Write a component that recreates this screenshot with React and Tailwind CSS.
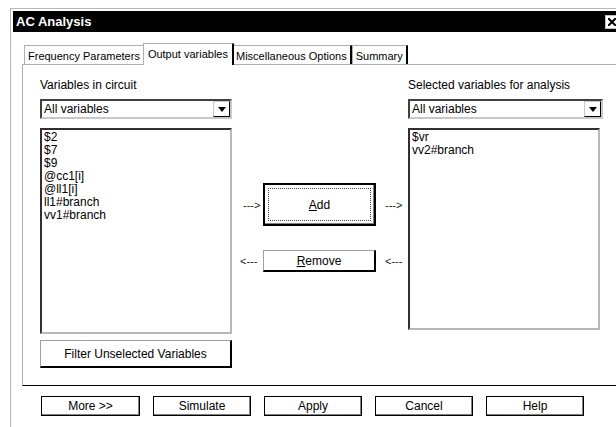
import React from "react";

function Arrow({ dir }) {
  return (
    <span className="whitespace-nowrap text-[11px] text-[#202020]">
      {dir === "right" ? "--->" : "<---"}
    </span>
  );
}

function Dropdown({ className }) {
  return (
    <div
      className={
        "flex h-[20px] items-stretch border-2 border-t-[#404040] border-l-[#404040] border-r-[#c8c8c8] border-b-[#c8c8c8] bg-white " +
        className
      }
    >
      <div className="flex-1 pl-[2px] leading-[16px]">All variables</div>
      <div className="flex w-[17px] items-center justify-center border border-t-[#c8c8c8] border-l-[#c8c8c8] border-r-black border-b-black">
        <svg width="8" height="5" viewBox="0 0 8 5">
          <path d="M0 0h8L4 5z" fill="black" />
        </svg>
      </div>
    </div>
  );
}

function ListBox({ items, className }) {
  return (
    <div
      className={
        "border-2 border-t-[#303030] border-l-[#303030] border-r-[#b8b8b8] border-b-[#b8b8b8] bg-white pl-[2px] pt-[1px] " +
        className
      }
    >
      {items.map((item) => (
        <div key={item} className="leading-[13px]">
          {item}
        </div>
      ))}
    </div>
  );
}

function Tab({ label, active }) {
  if (active) {
    return (
      <div className="relative z-10 -mb-px -mx-[2px] flex h-[22px] items-start border-l border-t border-r-2 border-l-[#b0b0b0] border-t-[#b0b0b0] border-r-black bg-white px-[4px] pt-[2px]">
        {label}
      </div>
    );
  }
  return (
    <div className="flex h-[19px] items-start border-l border-t border-r-2 border-l-[#b0b0b0] border-t-[#b0b0b0] border-r-black px-[3px] pt-[2px]">
      {label}
    </div>
  );
}

function Button({ children, className }) {
  return (
    <div
      className={
        "flex items-center justify-center border border-black shadow-[inset_-1px_-1px_0_#808080] " +
        className
      }
    >
      {children}
    </div>
  );
}

export default function App() {
  const tabs = ["Frequency Parameters", "Output variables", "Miscellaneous Options", "Summary"];

  return (
    <div className="h-[427px] w-[616px] overflow-hidden bg-white pl-[10px] pt-[8px] font-['Liberation_Sans',Arial,sans-serif] text-[12px] text-black">
      <div className="h-[440px] w-[620px] border-l border-t border-[#b8b8b8] pl-[2px] pt-[2px]">
        <div className="flex h-[21px] w-[606px] items-center justify-between bg-black pl-[3px]">
          <span className="text-[13px] font-bold text-white">AC Analysis</span>
          <span className="flex h-[14px] w-[14px] items-center justify-center border border-[#c0c0c0] bg-white">
            <svg width="8" height="8" viewBox="0 0 8 8">
              <path d="M0 0L8 8M8 0L0 8" stroke="black" strokeWidth="2" />
            </svg>
          </span>
        </div>

        <div className="ml-[9px] mt-[11px] flex h-[21px] items-end pl-[2px] text-[11px]">
          {tabs.map((t) => (
            <Tab key={t} label={t} active={t === "Output variables"} />
          ))}
        </div>

        <div className="ml-[9px] flex h-[322px] w-[600px] border-l border-t border-b border-l-[#b0b0b0] border-t-[#b0b0b0] border-b-black">
          <div className="ml-[17px] flex w-[192px] flex-col pt-[13px]">
            <div className="h-[15px] leading-[15px]">Variables in circuit</div>
            <Dropdown className="mt-[6px] w-[192px]" />
            <ListBox
              className="mt-[9px] h-[206px] w-[192px]"
              items={["$2", "$7", "$9", "@cc1[i]", "@ll1[i]", "ll1#branch", "vv1#branch"]}
            />
            <div className="mt-[6px] flex h-[28px] items-center justify-center border border-t-[#a0a0a0] border-l-[#a0a0a0] border-r-2 border-b-2 border-r-black border-b-black">
              Filter Unselected Variables
            </div>
          </div>

          <div className="flex w-[176px] flex-col pt-[118px]">
            <div className="flex h-[43px] items-center">
              <div className="ml-[11px] w-[20px]">
                <Arrow dir="right" />
              </div>
              <div className="flex h-[43px] w-[113px] items-center justify-center border-2 border-black p-[3px] shadow-[inset_-1px_-1px_0_#808080]">
                <div className="flex h-full w-full items-center justify-center border border-dotted border-[#404040]">
                  <span><u>A</u>dd</span>
                </div>
              </div>
              <div className="ml-[9px]">
                <Arrow dir="right" />
              </div>
            </div>
            <div className="mt-[24px] flex h-[22px] items-center">
              <div className="ml-[8px] w-[23px]">
                <Arrow dir="left" />
              </div>
              <div className="flex h-[22px] w-[113px] items-center justify-center border border-t-[#a0a0a0] border-l-[#a0a0a0] border-r-2 border-b-2 border-r-black border-b-black">
                <span><u>R</u>emove</span>
              </div>
              <div className="ml-[9px]">
                <Arrow dir="left" />
              </div>
            </div>
          </div>

          <div className="flex w-[195px] flex-col pt-[13px]">
            <div className="h-[15px] leading-[15px]">Selected variables for analysis</div>
            <Dropdown className="mt-[6px] w-[195px]" />
            <ListBox className="mt-[9px] h-[202px] w-[192px]" items={["$vr", "vv2#branch"]} />
          </div>
        </div>

        <div className="ml-[28px] mt-[10px] flex gap-[13px]">
          <Button className="h-[20px] w-[99px]">More &gt;&gt;</Button>
          <Button className="h-[20px] w-[98px]">Simulate</Button>
          <Button className="h-[20px] w-[98px]">Apply</Button>
          <Button className="h-[20px] w-[98px]">Cancel</Button>
          <Button className="h-[20px] w-[98px]">Help</Button>
        </div>
      </div>
    </div>
  );
}
